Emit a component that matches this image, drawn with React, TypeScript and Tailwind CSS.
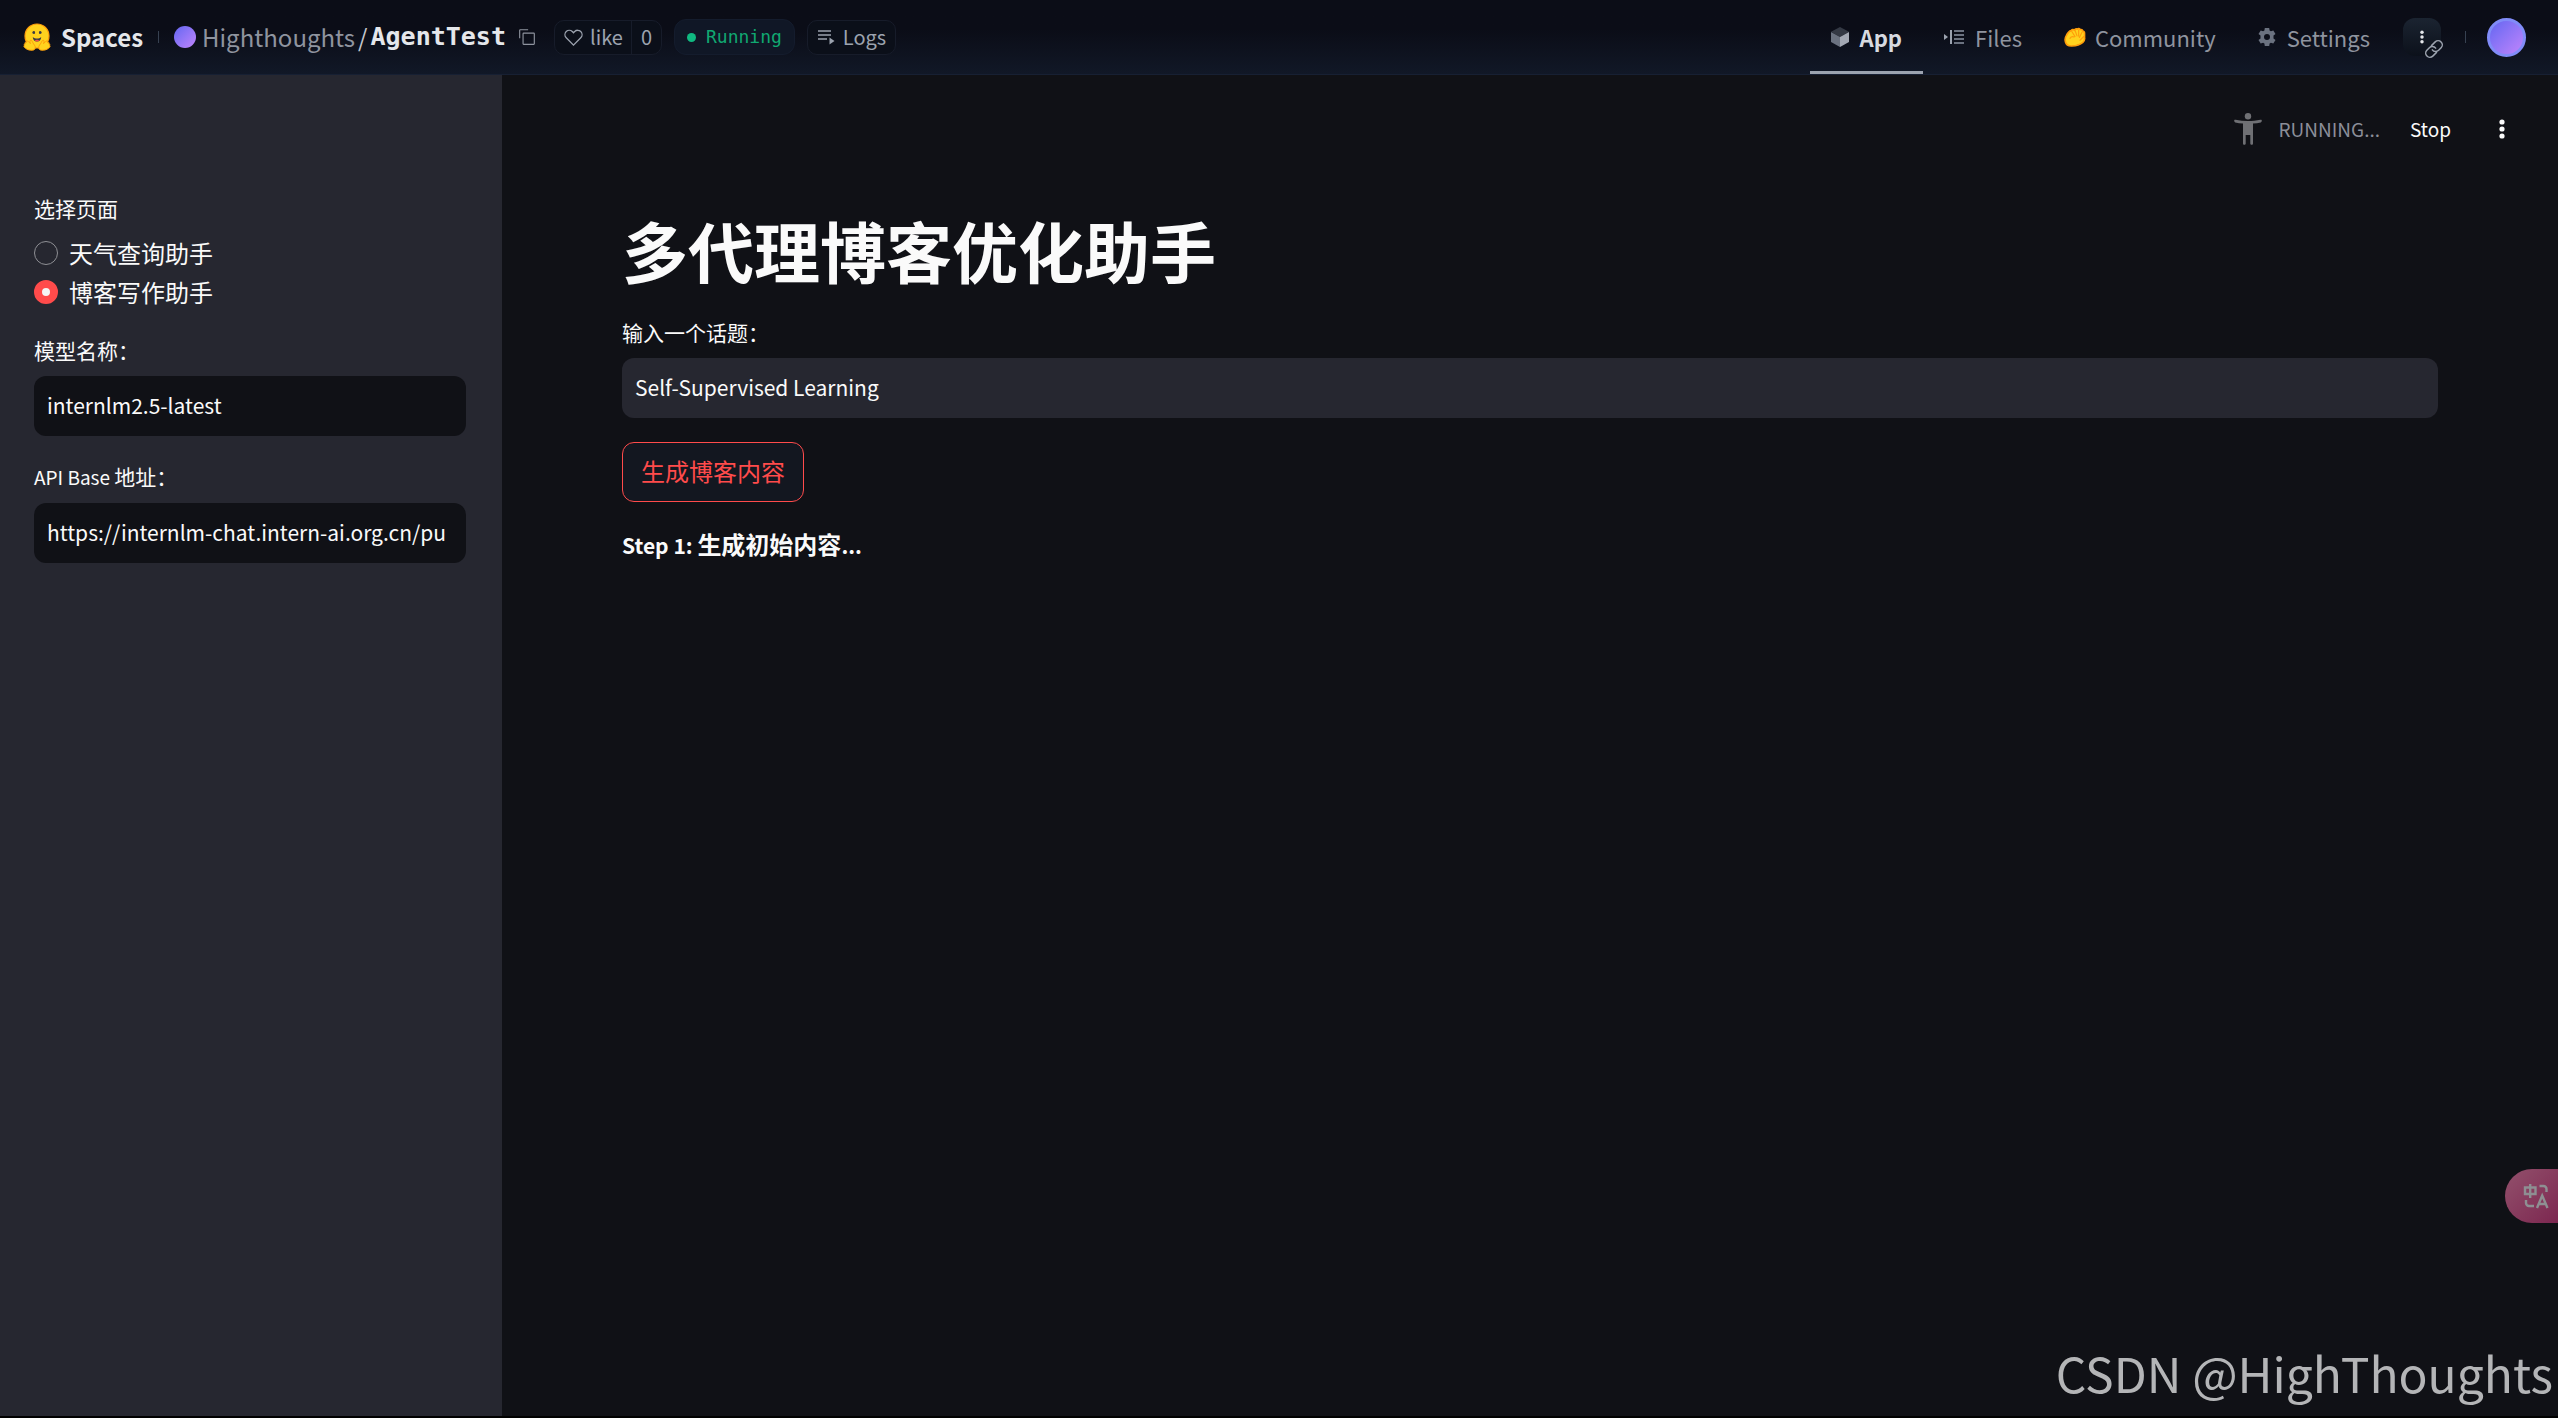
import React, { useState } from "react";
import clsx from "clsx";

const HuggingFace = () => (
  <svg viewBox="0 0 28 28" className="h-7 w-7" aria-hidden="true">
    <circle cx="14" cy="13" r="12" fill="#FFD21E" stroke="#FF9D0B" strokeWidth="1.2" />
    <path d="M10.3 8.2c.9-.4 1.8.2 1.8 1.4 0 1-.6 1.6-1.3 1.5-.8-.1-1.5-.7-1.5-1.5 0-.6.4-1.1 1-1.4z" fill="#3A3B45" />
    <path d="M17.7 8.2c-.9-.4-1.8.2-1.8 1.4 0 1 .6 1.6 1.3 1.5.8-.1 1.5-.7 1.5-1.5 0-.6-.4-1.1-1-1.4z" fill="#3A3B45" />
    <path d="M9.8 14c1.2 1 2.6 1.5 4.2 1.5s3-.5 4.2-1.5c0 2.7-1.6 4.6-4.2 4.6S9.8 16.7 9.8 14z" fill="#3A3B45" />
    <path d="M11.8 17.6c.4-1 3.9-1 4.4 0-.6.7-1.3 1-2.2 1s-1.7-.3-2.2-1z" fill="#EF4E4E" />
    <path
      d="M1.3 22.6c-.7-1 .2-1.9 1-1.6-1-1.1.1-2.3 1.2-1.6-.3-1.3 1-1.9 1.9-.9l2 2.1c-.5-1.7-.9-3.1.2-3.3 1-.2 1.5.8 2.1 2.1 1 2 2.9 3.4 2.6 5.6-.3 2-2.3 2.4-4.7 2.2-2.9-.2-5-1.6-6.3-3-.6-.7-.4-1.3 0-1.6z"
      fill="#FFD21E"
      stroke="#FF9D0B"
      strokeWidth="1"
    />
    <path
      d="M26.7 22.6c.7-1-.2-1.9-1-1.6 1-1.1-.1-2.3-1.2-1.6.3-1.3-1-1.9-1.9-.9l-2 2.1c.5-1.7.9-3.1-.2-3.3-1-.2-1.5.8-2.1 2.1-1 2-2.9 3.4-2.6 5.6.3 2 2.3 2.4 4.7 2.2 2.9-.2 5-1.6 6.300-3 .6-.7.4-1.300 0-1.600z"
      fill="#FFD21E"
      stroke="#FF9D0B"
      strokeWidth="1"
    />
  </svg>
);

const CopyIcon = () => (
  <svg viewBox="0 0 32 32" className="h-[18px] w-[18px]" fill="currentColor" aria-hidden="true">
    <path d="M28 10v18H10V10h18m0-2H10a2 2 0 0 0-2 2v18a2 2 0 0 0 2 2h18a2 2 0 0 0 2-2V10a2 2 0 0 0-2-2Z" />
    <path d="M4 18H2V4a2 2 0 0 1 2-2h14v2H4Z" />
  </svg>
);

const HeartIcon = () => (
  <svg viewBox="0 0 32 32" className="h-[21px] w-[21px]" fill="currentColor" aria-hidden="true">
    <path d="M22.45 6a5.47 5.47 0 0 1 3.91 1.64 5.7 5.7 0 0 1 0 8L16 26.13 5.64 15.64a5.7 5.7 0 0 1 0-8 5.48 5.48 0 0 1 7.82 0l2.54 2.6 2.53-2.58A5.44 5.44 0 0 1 22.45 6m0-2a7.47 7.47 0 0 0-5.34 2.24L16 7.36l-1.11-1.12a7.49 7.49 0 0 0-10.68 0 7.72 7.72 0 0 0 0 10.82L16 29l11.79-11.94a7.72 7.72 0 0 0 0-10.82A7.49 7.49 0 0 0 22.45 4Z" />
  </svg>
);

const LogsIcon = () => (
  <svg viewBox="0 0 18 18" className="h-[18px] w-[18px]" aria-hidden="true">
    <path d="M1 3h13M1 7h13M1 11h9" stroke="currentColor" strokeWidth="1.3" fill="none" />
    <path d="M12.5 9.5v7l5-3.5z" fill="currentColor" />
  </svg>
);

const CubeIcon = () => (
  <svg viewBox="0 0 18 20" className="h-5 w-[18px]" aria-hidden="true">
    <path d="M9 0l9 4.8L9 10 0 4.8z" fill="#343944" />
    <path d="M0 5l9 5v10l-9-5z" fill="#6b7280" />
    <path d="M18 5l-9 5v10l9-5z" fill="#a3a8b3" />
  </svg>
);

const FilesIcon = () => (
  <svg viewBox="0 0 20 16" className="h-4 w-5" aria-hidden="true">
    <path d="M0 5l4 3-4 3z" fill="#9ca3af" />
    <path d="M7 1v14" stroke="#9ca3af" strokeWidth="2" />
    <path d="M10 2h10M10 6h10M10 10h10M10 14h10" stroke="#6b7280" strokeWidth="1.8" />
  </svg>
);

const HandIcon = () => (
  <svg viewBox="0 0 24 24" className="h-[22px] w-[22px]" aria-hidden="true">
    <path
      d="M2.5 10.500C1.200 12.500.9 15 1.600 17.500c.8 3 3.600 4.500 7 4.300 4.200-.2 9-1.500 12-4 1.500-1.300 1.900-2.600 1.800-4V8c0-1.500-.8-2.400-2-2.500-.2-1.300-1.400-2-2.600-1.600-.7-1.200-2.300-1.400-3.300-.5-1.300-.6-2.500 0-3 1.100-1.300-1-3-.7-3.900.6-1.300.3-3.800 2.900-5.100 5.400z"
      fill="#FFD21E"
      stroke="#FF9D0B"
      strokeWidth="1.800"
    />
    <path
      d="M8.500 6l3.500 5.500M12 4.800l2.200 6M16 4.500v6.500M19.800 6.500L16.800 12.500M21.500 11.500L17.500 15.500M11 12c-1.700-.8-3.500 0-4.500 1.500"
      fill="none"
      stroke="#FF9D0B"
      strokeWidth="1.300"
      strokeLinecap="round"
    />
  </svg>
);

const GearIcon = () => (
  <svg viewBox="0 0 18 18" className="h-[18px] w-[18px]" aria-hidden="true">
    <path
      fillRule="evenodd"
      fill="#6b7280"
      d="M6.800 0h4.400l.4 2.500 1.300.8 2.400-.9L17.500 6l-2 1.600v2.800l2 1.600-2.200 3.600-2.400-.9-1.300.8-.4 2.500H6.800l-.4-2.500-1.300-.8-2.400.9L.5 12l2-1.600V7.600L.5 6l2.200-3.600 2.400.9 1.300-.8zM9 6a3 3 0 1 0 0 6 3 3 0 0 0 0-6z"
    />
  </svg>
);

const LinkIcon = () => (
  <svg viewBox="0 0 24 24" className="h-5 w-5" fill="none" stroke="#9ca3af" strokeWidth="1.8" strokeLinecap="round" aria-hidden="true">
    <path d="M10 13a5 5 0 0 0 7.54.54l3-3a5 5 0 0 0-7.07-7.07l-4.5 4.5" />
    <path d="M14 11a5 5 0 0 0-7.54-.54l-3 3a5 5 0 0 0 7.07 7.07l4.5-4.5" />
  </svg>
);

const RunnerIcon = () => (
  <svg viewBox="0 0 28 32" className="h-8 w-7" fill="#6f7074" aria-hidden="true">
    <circle cx="14" cy="3.3" r="3.2" />
    <path d="M.2 7.6C0 6.8.8 6.5 1.6 6.7 9.5 8.4 18.5 8.4 26.4 6.7c.8-.2 1.6.1 1.4.9-.1.8-.2 1.6-1 1.8-2.6.7-5 1-7.8 1.2V30.5c0 1-.5 1.3-1.3 1.3s-1.4-.4-1.4-1.3V22h-4.600v8.500c0 .9-.6 1.300-1.400 1.300S9 31.500 9 30.500V10.600C6.200 10.400 3.800 10.100 1.200 9.400.4 9.200.3 8.400.2 7.600z" />
  </svg>
);

const Dots = ({ className }: { className: string }) => (
  <svg viewBox="0 0 6 20" className={className} fill="currentColor" aria-hidden="true">
    <circle cx="3" cy="3" r="2.6" />
    <circle cx="3" cy="10" r="2.6" />
    <circle cx="3" cy="17" r="2.6" />
  </svg>
);

const TranslateIcon = () => (
  <svg viewBox="0 0 26 26" className="h-[26px] w-[26px]" fill="none" stroke="#8e8f92" strokeWidth="2.4" aria-hidden="true">
    <path d="M2 4.500h10.500v6.500H2zM7.200 1v14" />
    <path d="M16.500 3h4a3 3 0 0 1 3 3v3" />
    <path d="M3 17v3a3 3 0 0 0 3 3h5" />
    <path d="M14 25l5.200-12.500L24.500 25M15.500 21h7" />
  </svg>
);

const tabs = [
  { name: "App", icon: <CubeIcon /> },
  { name: "Files", icon: <FilesIcon /> },
  { name: "Community", icon: <HandIcon /> },
  { name: "Settings", icon: <GearIcon /> },
];

const pages = ["天气查询助手", "博客写作助手"];

const Header = () => (
  <header className="flex h-[75px] shrink-0 items-center border-b border-[#172033] bg-linear-to-b from-[#0b0d17] from-40% to-[#111827] pr-8 pl-[23px] text-[22px] text-[#8f949f]">
    <a href="#spaces" className="flex items-center gap-[10px] text-2xl font-bold text-[#e5e7eb]">
      <HuggingFace />
      Spaces
    </a>
    <span className="mx-[15px] h-3 w-px bg-[#374151]" />
    <span className="mr-[6px] h-[22px] w-[22px] rounded-full bg-linear-to-br from-[#6366f1] to-[#c084fc]" />
    <a href="#owner" className="text-2xl">Highthoughts</a>
    <span className="mx-[3px] text-2xl text-[#c4c7cd]">/</span>
    <a href="#repo" className="font-['DejaVu_Sans_Mono',monospace] text-[25px] font-bold text-[#e5e7eb]">
      AgentTest
    </a>
    <button type="button" aria-label="Copy" className="ml-3">
      <CopyIcon />
    </button>
    <div className="ml-[18px] flex h-[35px] items-center rounded-[10px] border border-[#171c2a] bg-[#0b0f19] text-[20px] text-[#9ca3af]">
      <button type="button" className="flex h-full items-center gap-[6px] border-r border-[#171c2a] px-2">
        <HeartIcon />
        like
      </button>
      <button type="button" className="px-[9px]">0</button>
    </div>
    <div className="ml-3 flex h-9 items-center gap-[10px] rounded-xl border border-[#141c2d] bg-[#101726] px-3 font-['DejaVu_Sans_Mono',monospace] text-lg text-[#10a871]">
      <span className="h-[9px] w-[9px] rounded-full bg-[#10b981]" />
      Running
    </div>
    <button type="button" className="ml-3 flex h-[35px] items-center gap-2 rounded-[10px] border border-[#171c2a] bg-[#0b0f19] px-[9px] text-[20px] text-[#9ca3af]">
      <LogsIcon />
      Logs
    </button>

    <nav className="ml-auto flex h-full">
      {tabs.map((tab) => (
        <a
          key={tab.name}
          href={`#${tab.name.toLowerCase()}`}
          className={clsx(
            "flex h-full items-center px-[21px]",
            tab.name === "Community" ? "gap-[9px]" : "gap-[11px]",
            tab.name === "App" && "border-b-3 border-[#9ca3af] pt-[3px] font-bold text-[#d7dae0]",
          )}
        >
          {tab.icon}
          {tab.name}
        </a>
      ))}
    </nav>
    <button
      type="button"
      aria-label="More"
      className="relative ml-3 flex h-[38px] w-[38px] items-center justify-center rounded-xl bg-linear-to-b from-[#1b2431] to-[#0c111b] text-[#e5e7eb]"
    >
      <Dots className="h-[14px] w-1" />
      <span className="absolute -right-[3px] -bottom-[3px]">
        <LinkIcon />
      </span>
    </button>
    <span className="mr-[21px] ml-6 h-3 w-px bg-[#374151]" />
    <button
      type="button"
      aria-label="Account"
      className="h-[39px] w-[39px] rounded-full border-3 border-[#818cf8] bg-linear-to-br from-[#6366f1] to-[#c084fc]"
    />
  </header>
);

const Sidebar = () => {
  const [page, setPage] = useState(pages[1]);

  return (
    <aside className="w-[502px] shrink-0 bg-[#262730] pt-[118px] pr-9 pl-[34px]">
      <fieldset>
        <legend className="mb-3 text-[21px] leading-[30px]">选择页面</legend>
        <div className="flex flex-col gap-[3px]">
          {pages.map((name) => (
            <label key={name} className="flex h-9 items-center gap-[11px] text-2xl leading-9">
              <input
                type="radio"
                name="page"
                checked={page === name}
                onChange={() => setPage(name)}
                className="h-6 w-6 appearance-none rounded-full border border-[#8e8f94] checked:border-8 checked:border-[#ff4b4b] checked:bg-[#f5f5f5]"
              />
              {name}
            </label>
          ))}
        </div>
      </fieldset>

      <div className="mt-[25px]">
        <label htmlFor="model" className="mb-[11px] block text-[21px] leading-[30px]">
          模型名称：
        </label>
        <input
          id="model"
          defaultValue="internlm2.5-latest"
          className="h-[60px] w-full rounded-xl bg-[#101116] px-[13px] pb-[2px] text-[21px] outline-none"
        />
      </div>

      <div className="mt-[25px]">
        <label htmlFor="base" className="mb-[11px] block text-[21px] leading-[30px]">
          <span className="text-[19px]">API Base </span>地址：
        </label>
        <input
          id="base"
          defaultValue="https://internlm-chat.intern-ai.org.cn/pu"
          className="h-[60px] w-full rounded-xl bg-[#101116] px-[13px] pb-[2px] text-[21px] outline-none"
        />
      </div>
    </aside>
  );
};

const Blog = () => (
  <main className="flex-1">
    <div className="flex h-[108px] items-center justify-end pr-[53px]">
      <RunnerIcon />
      <span className="ml-[17px] text-[19px] text-[#8b8e99]">RUNNING...</span>
      <button type="button" className="ml-[30px] text-[19px]">Stop</button>
      <button type="button" aria-label="Menu" className="ml-12">
        <Dots className="h-5 w-[6px]" />
      </button>
    </div>

    <div className="px-[120px] pt-[26px]">
      <h1 className="mb-7 text-[66px] leading-[80px] font-bold">多代理博客优化助手</h1>
      <label htmlFor="topic" className="mb-[11px] block text-[21px] leading-[30px]">
        输入一个话题：
      </label>
      <input
        id="topic"
        defaultValue="Self-Supervised Learning"
        className="h-[60px] w-full rounded-xl bg-[#262730] px-[13px] pb-[2px] text-[21px] outline-none"
      />
      <button
        type="button"
        className="mt-6 flex h-[60px] items-center rounded-xl border border-[#ff4b4b] bg-[#131720] px-[18px] pb-[2px] text-2xl text-[#ff4b4b]"
      >
        生成博客内容
      </button>
      <p className="mt-6 text-2xl leading-9 font-bold">
        <span className="text-[21px]">Step 1: </span>生成初始内容<span className="text-[21px]">...</span>
      </p>
    </div>
  </main>
);

const App = () => (
  <div className="flex min-h-screen flex-col border-b-2 border-black bg-[#101116] font-['Noto_Sans_CJK_SC',sans-serif] text-[#fafafa]">
    <Header />
    <div className="flex flex-1">
      <Sidebar />
      <Blog />
    </div>

    <button
      type="button"
      aria-label="Translate"
      className="fixed right-0 bottom-[195px] flex h-[54px] w-[53px] items-center rounded-l-full bg-linear-to-br from-[#92506c] to-[#7c2650] pl-[18px]"
    >
      <TranslateIcon />
    </button>
    <div className="fixed right-[5px] bottom-[10px] text-5xl leading-[72px] text-[#b4b5b7]">
      CSDN @HighThoughts
    </div>
  </div>
);

export default App;
